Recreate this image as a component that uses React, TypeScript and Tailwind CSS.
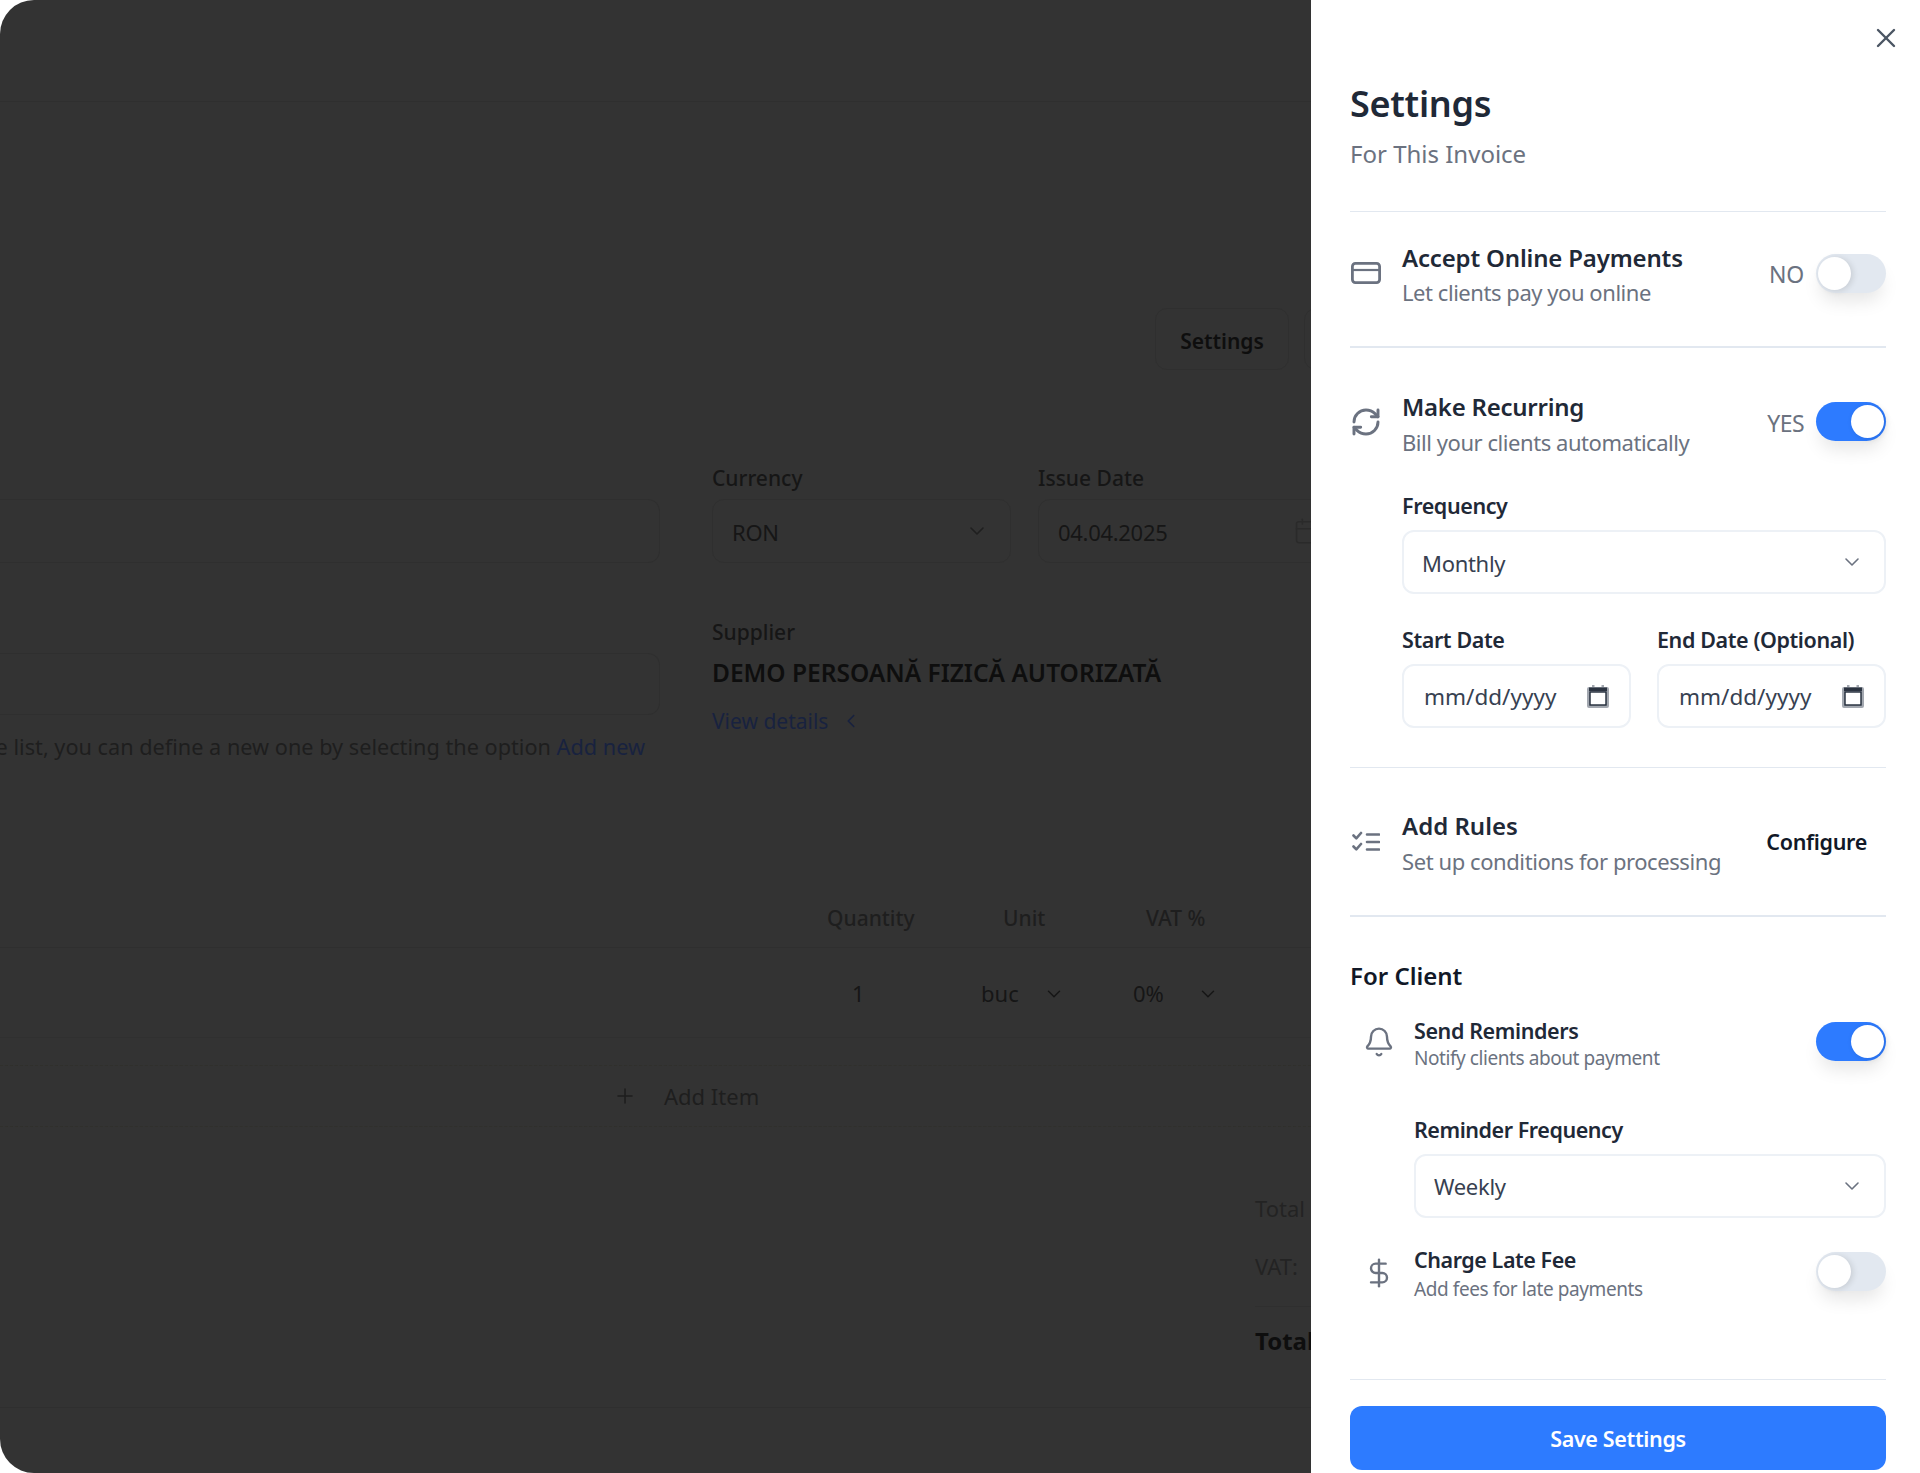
import { Bell, Calendar, ChevronDown, ChevronLeft, DollarSign, Plus, RefreshCw, X } from 'lucide-react';
import type { ReactNode } from 'react';

function Toggle({ on }: { on: boolean }) {
  return (
    <div
      className={`flex h-[39px] w-[70px] shrink-0 items-center rounded-full px-[2px] shadow-[0_12px_18px_-4px_rgba(0,0,0,0.1)] ${
        on ? 'justify-end bg-[#2d7bff]' : 'justify-start bg-[#e2e8f0]'
      }`}
    >
      <div className="h-[33px] w-[33px] rounded-full bg-white shadow-[2px_1px_6px_rgba(0,0,0,0.12)]" />
    </div>
  );
}

function CardIcon() {
  return (
    <svg width="30" height="22" viewBox="0 0 30 22" fill="none" stroke="#6b7280" strokeWidth="2.8">
      <rect x="1.4" y="1.4" width="27.2" height="19.2" rx="3" />
      <path d="M1.4 8h27.2" strokeWidth="2.2" />
    </svg>
  );
}

function RulesIcon() {
  return (
    <svg width="28" height="22" viewBox="0 0 28 22" fill="none" stroke="#6b7280" strokeWidth="2.6" strokeLinecap="round" strokeLinejoin="round">
      <path d="M1.5 4.5l2.8 2.8 4.7-5.3" />
      <path d="M1.5 15.5l2.8 2.8 4.7-5.3" />
      <path d="M15 3.5h12M15 11h12M15 18.5h12" />
    </svg>
  );
}

function DateIcon() {
  return (
    <svg width="22" height="23" viewBox="0 0 22 23" className="shrink-0">
      <path d="M5 0h2.5v2h7V0H17v2h3a2 2 0 0 1 2 2v17a2 2 0 0 1-2 2H2a2 2 0 0 1-2-2V4a2 2 0 0 1 2-2h3z" fill="#a3a8b0" />
      <rect x="2" y="2.5" width="18" height="3.5" fill="#2b3340" />
      <rect x="3" y="7" width="16" height="13" fill="#ffffff" stroke="#1f2937" strokeWidth="1.4" />
    </svg>
  );
}

function Select({ value, textClass }: { value: string; textClass: string }) {
  return (
    <div className="mt-[9px] flex h-[64px] items-center justify-between rounded-[12px] border-2 border-[#edf1f6] bg-white pr-[20px] pl-[18px]">
      <span className={`text-[22px] leading-[32px] tracking-[-0.3px] text-[#374151] ${textClass}`}>{value}</span>
      <ChevronDown size={24} strokeWidth={1.6} className="text-[#6b7280]" />
    </div>
  );
}

function DateField({ label }: { label: string }) {
  return (
    <div className="flex-1">
      <div className="text-[21.5px] leading-[30px] font-semibold tracking-[-0.4px] whitespace-nowrap text-[#1f2937]">{label}</div>
      <div className="mt-[9px] flex h-[64px] items-center justify-between rounded-[12px] border-2 border-[#edf1f6] bg-white px-[20px]">
        <span className="pt-[1px] text-[22.5px] leading-[32px] text-[#374151]">mm/dd/yyyy</span>
        <DateIcon />
      </div>
    </div>
  );
}

function DimField({ label, value, width, pad, children }: { label: string; value: string; width: string; pad: string; children: ReactNode }) {
  return (
    <div className={`shrink-0 ${width}`}>
      <div className="-mt-[1px] text-[21px] leading-[30px] font-medium text-[#161616]">{label}</div>
      <div className={`mt-[6px] flex h-[64px] items-center justify-between rounded-[12px] border border-[#2f2f2f] pl-[19px] ${pad}`}>
        <span className="pt-[2px] text-[22px] tracking-[-0.3px] text-[#161616]">{value}</span>
        {children}
      </div>
    </div>
  );
}

function InvoiceBackdrop() {
  return (
    <div className="flex h-full w-[1311px] shrink-0 flex-col overflow-hidden rounded-l-[34px] bg-[#333333]">
      <div className="h-[102px] shrink-0 border-b border-[#2f2f2f]" />

      <div className="mt-[206px] flex shrink-0 gap-[15px] pl-[1155px]">
        <div className="flex h-[62px] w-[134px] shrink-0 items-center justify-center rounded-[12px] border border-[#2f2f2f] pt-[5px] text-[21px] font-semibold text-[#0e0e0e]">
          Settings
        </div>
        <div className="h-[62px] w-[134px] shrink-0 rounded-[12px] border border-[#2f2f2f]" />
      </div>

      <div className="mt-[94px] flex shrink-0 gap-[52px]">
        <div className="w-[660px] shrink-0 pt-[35px]">
          <div className="h-[64px] rounded-r-[12px] border border-l-0 border-[#2f2f2f]" />
          <div className="mt-[90px] h-[62px] rounded-r-[12px] border border-l-0 border-[#2f2f2f]" />
          <div className="mt-[16px] flex justify-end pr-[15px] text-[21.7px] leading-[32px] whitespace-nowrap text-[#1e1e1e]">
            <span>If the client is not in the list, you can define a new one by selecting the option&nbsp;</span>
            <span className="text-[#18223f]">Add new</span>
          </div>
        </div>
        <div className="w-[600px] shrink-0">
          <div className="flex gap-[27px]">
            <DimField label="Currency" value="RON" width="w-[299px]" pad="pr-[21px]">
              <ChevronDown size={24} strokeWidth={1.6} className="text-[#1f1f1f]" />
            </DimField>
            <DimField label="Issue Date" value="04.04.2025" width="w-[300px]" pad="pr-[16px]">
              <Calendar size={28} strokeWidth={1.3} className="text-[#2a2a2a]" />
            </DimField>
          </div>
          <div className="mt-[54px] text-[21px] leading-[30px] font-medium text-[#161616]">Supplier</div>
          <div className="mt-[10px] text-[24.5px] leading-[32px] font-semibold whitespace-nowrap text-[#0e0e0e]">
            DEMO PERSOANĂ FIZICĂ AUTORIZATĂ
          </div>
          <div className="mt-[16px] flex items-center gap-[12px] text-[21px] leading-[32px] text-[#18223f]">
            View details
            <ChevronLeft size={22} strokeWidth={1.8} />
          </div>
        </div>
      </div>

      <div className="mt-[140px] grid shrink-0 grid-cols-[827px_176px_143px_1fr] border-b border-[#2f2f2f] pb-[14px] text-[21px] leading-[30px] font-medium text-[#1e1e1e]">
        <span />
        <span>Quantity</span>
        <span>Unit</span>
        <span>VAT %</span>
      </div>

      <div className="grid h-[90px] shrink-0 grid-cols-[852px_129px_152px_1fr] items-center border-b border-[#303030] pt-[2px] text-[22px] text-[#161616]">
        <span />
        <span>1</span>
        <div className="flex w-[84px] items-center justify-between">
          buc
          <ChevronDown size={22} strokeWidth={1.6} />
        </div>
        <div className="flex w-[86px] items-center justify-between">
          0%
          <ChevronDown size={22} strokeWidth={1.6} />
        </div>
      </div>

      <div className="mt-[27px] flex h-[62px] shrink-0 items-center gap-[27px] border-y border-dashed border-[#30302c] pl-[613px] text-[22px] text-[#1e1e1e]">
        <Plus size={24} strokeWidth={1.6} />
        Add Item
      </div>

      <div className="mt-[65px] flex shrink-0 flex-col pl-[1255px] text-[22px] leading-[32px] whitespace-nowrap text-[#232323]">
        <div>Total before VAT:</div>
        <div className="mt-[26px]">VAT:</div>
        <div className="mt-[24px] border-t border-[#2f2f2f] pt-[18px] text-[24px] font-bold text-[#0e0e0e]">Total</div>
      </div>

      <div className="mt-[50px] h-[1px] shrink-0 bg-[#2f2f2f]" />
    </div>
  );
}

function SettingsPanel() {
  return (
    <div className="flex h-full w-[609px] shrink-0 flex-col bg-white pr-[34px] pl-[39px] font-['Noto_Sans',sans-serif]">
      <div className="flex justify-end pt-[22px]">
        <X size={32} strokeWidth={1.8} className="-mr-[16px] text-[#4b5563]" />
      </div>
      <div className="mt-[28px] text-[36px] leading-[44px] font-semibold tracking-[-0.3px] text-[#1f2937]">Settings</div>
      <div className="mt-[12px] border-b border-[#e2e8f0] pb-[41px] text-[24px] leading-[32px] text-[#6b7280]">
        For This Invoice
      </div>

      {/* Online payments */}
      <div className="flex items-start border-b-2 border-[#e2e8f0] pt-[30px] pb-[39px]">
        <div className="w-[52px] shrink-0 pt-[20px] pl-[1px]">
          <CardIcon />
        </div>
        <div className="flex-1">
          <div className="text-[24px] leading-[32px] font-semibold tracking-[-0.17px] text-[#1f2937]">Accept Online Payments</div>
          <div className="mt-[3px] text-[22px] leading-[30px] tracking-[-0.45px] text-[#6b7280]">Let clients pay you online</div>
        </div>
        <div className="flex items-center gap-[12px] pt-[12px]">
          <span className="pt-[2px] text-[23px] tracking-[-0.2px] text-[#6b7280]">NO</span>
          <Toggle on={false} />
        </div>
      </div>

      {/* Recurring */}
      <div className="border-b border-[#e2e8f0] pt-[43px] pb-[39px]">
        <div className="flex items-start">
          <div className="w-[52px] shrink-0 pt-[15px]">
            <RefreshCw size={32} strokeWidth={2.2} className="text-[#6b7280]" />
          </div>
          <div className="flex-1">
            <div className="text-[24px] leading-[32px] font-semibold tracking-[-0.25px] text-[#1f2937]">Make Recurring</div>
            <div className="mt-[4px] text-[22px] leading-[30px] tracking-[-0.45px] text-[#6b7280]">Bill your clients automatically</div>
          </div>
          <div className="flex items-center gap-[12px] pt-[11px]">
            <span className="pt-[4px] text-[23px] tracking-[-0.6px] text-[#6b7280]">YES</span>
            <Toggle on />
          </div>
        </div>
        <div className="mt-[34px] pl-[52px]">
          <div className="text-[21.5px] leading-[30px] font-semibold tracking-[-0.4px] text-[#1f2937]">Frequency</div>
          <Select value="Monthly" textClass="pt-[2px]" />
          <div className="mt-[31px] flex gap-[26px]">
            <DateField label="Start Date" />
            <DateField label="End Date (Optional)" />
          </div>
        </div>
      </div>

      {/* Rules */}
      <div className="flex items-start border-b-2 border-[#e2e8f0] pt-[42px] pb-[39px]">
        <div className="w-[52px] shrink-0 pt-[21px] pl-[2px]">
          <RulesIcon />
        </div>
        <div className="flex-1">
          <div className="text-[24px] leading-[32px] font-semibold text-[#1f2937]">Add Rules</div>
          <div className="mt-[4px] text-[22px] leading-[30px] tracking-[-0.42px] text-[#6b7280]">Set up conditions for processing</div>
        </div>
        <div className="pt-[16px] pr-[19px] text-[21.5px] leading-[32px] font-semibold tracking-[-0.3px] text-[#111827]">Configure</div>
      </div>

      {/* Client */}
      <div className="mt-[43px] text-[24px] leading-[32px] font-semibold text-[#111827]">For Client</div>
      <div className="mt-[23px] flex items-start">
        <div className="w-[64px] shrink-0 pt-[11px] pl-[13px]">
          <Bell size={32} strokeWidth={1.8} className="text-[#6b7280]" />
        </div>
        <div className="flex-1">
          <div className="pt-[1px] text-[21.5px] leading-[30px] font-semibold tracking-[-0.4px] text-[#1f2937]">Send Reminders</div>
          <div className="-mt-[1px] text-[19px] leading-[26px] tracking-[-0.43px] text-[#6b7280]">Notify clients about payment</div>
        </div>
        <div className="pt-[7px]">
          <Toggle on />
        </div>
      </div>
      <div className="mt-[44px] pl-[64px]">
        <div className="text-[21.5px] leading-[30px] font-semibold tracking-[-0.45px] text-[#1f2937]">Reminder Frequency</div>
        <Select value="Weekly" textClass="-mt-[1px]" />
      </div>
      <div className="mt-[27px] flex items-start">
        <div className="w-[64px] shrink-0 pt-[12px] pl-[13px]">
          <DollarSign size={32} strokeWidth={1.8} className="text-[#6b7280]" />
        </div>
        <div className="flex-1">
          <div className="text-[21.5px] leading-[30px] font-semibold tracking-[-0.45px] text-[#1f2937]">Charge Late Fee</div>
          <div className="pt-[1px] text-[19px] leading-[26px] tracking-[-0.42px] text-[#6b7280]">Add fees for late payments</div>
        </div>
        <div className="pt-[7px]">
          <Toggle on={false} />
        </div>
      </div>

      <div className="mt-[77px] border-t border-[#e2e8f0] pt-[26px]">
        <button className="flex h-[64px] w-full items-center justify-center rounded-[12px] bg-[#2d7bff] pt-[2px] text-[21.5px] font-semibold tracking-[-0.35px] text-white">
          Save Settings
        </button>
      </div>
    </div>
  );
}

export default function App() {
  return (
    <div className="flex h-[1473px] w-[1920px] overflow-hidden bg-white font-['Noto_Sans',sans-serif]">
      <InvoiceBackdrop />
      <SettingsPanel />
    </div>
  );
}
